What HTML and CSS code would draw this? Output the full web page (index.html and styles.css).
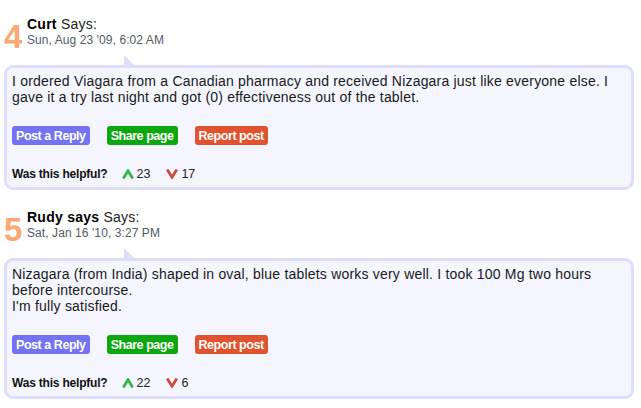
FILE: index.html
```html
<!DOCTYPE html>
<html>
<head>
<meta charset="utf-8">
<link rel="stylesheet" href="styles.css">
</head>
<body>
<div class="comments">
  <div class="post">
    <div class="post-head">
      <span class="num">4</span>
      <div class="who">
        <div class="name"><b>Curt</b> Says:</div>
        <div class="date">Sun, Aug 23 '09, 6:02 AM</div>
      </div>
    </div>
    <div class="bubble">
      <span class="tail"></span>
      <p class="text">I ordered Viagara from a Canadian pharmacy and received Nizagara just like everyone else. I gave it a try last night and got (0) effectiveness out of the tablet.</p>
      <div class="actions">
        <a class="btn btn-reply">Post a Reply</a>
        <a class="btn btn-share">Share page</a>
        <a class="btn btn-report">Report post</a>
      </div>
      <div class="helpful">
        <span class="helpful-q">Was this helpful?</span>
        <span class="vote up"><svg width="12" height="10" viewBox="0 0 12 10"><polyline points="1.2,9.5 6,1.8 10.8,9.5" fill="none" stroke="#2fb84a" stroke-width="2.8" stroke-linejoin="miter"/></svg>23</span>
        <span class="vote down"><svg width="12" height="10" viewBox="0 0 12 10"><polyline points="1.2,0.5 6,8.2 10.8,0.5" fill="none" stroke="#cf4a3c" stroke-width="2.8" stroke-linejoin="miter"/></svg>17</span>
      </div>
    </div>
  </div>
  <div class="post">
    <div class="post-head">
      <span class="num">5</span>
      <div class="who">
        <div class="name"><b>Rudy says</b> Says:</div>
        <div class="date">Sat, Jan 16 '10, 3:27 PM</div>
      </div>
    </div>
    <div class="bubble">
      <span class="tail"></span>
      <p class="text">Nizagara (from India) shaped in oval, blue tablets works very well. I took 100 Mg two hours before intercourse.<br>I'm fully satisfied.</p>
      <div class="actions">
        <a class="btn btn-reply">Post a Reply</a>
        <a class="btn btn-share">Share page</a>
        <a class="btn btn-report">Report post</a>
      </div>
      <div class="helpful">
        <span class="helpful-q">Was this helpful?</span>
        <span class="vote up"><svg width="12" height="10" viewBox="0 0 12 10"><polyline points="1.2,9.5 6,1.8 10.8,9.5" fill="none" stroke="#2fb84a" stroke-width="2.8" stroke-linejoin="miter"/></svg>22</span>
        <span class="vote down"><svg width="12" height="10" viewBox="0 0 12 10"><polyline points="1.2,0.5 6,8.2 10.8,0.5" fill="none" stroke="#cf4a3c" stroke-width="2.8" stroke-linejoin="miter"/></svg>6</span>
      </div>
    </div>
  </div>
</div>
</body>
</html>
```

FILE: styles.css
```css
* { box-sizing: border-box; }
body {
  margin: 0;
  background: #fff;
  font-family: "Liberation Sans", Arial, sans-serif;
  color: #111;
}
.comments {
  padding: 0 7px 0 4px;
  display: flex;
  flex-direction: column;
  gap: 3px;
}
.post {
  padding-top: 16px;
}
.post-head {
  display: flex;
  align-items: flex-start;
  gap: 5px;
}
.num {
  margin-top: 4px;
  font-size: 33px;
  line-height: 33px;
  font-weight: bold;
  color: #fba874;
  width: 18px;
}
.name {
  font-size: 14px;
  line-height: 17px;
  letter-spacing: 0.25px;
  color: #222;
}
.name b { color: #000; }
.date {
  font-size: 12px;
  line-height: 14px;
  letter-spacing: 0.08px;
  color: #555a66;
}
.bubble {
  position: relative;
  margin-top: 12px;
  border: 3px solid #dedefb;
  border-radius: 9px;
  background: #f4f5ff;
  padding: 5px 5px 6px 5px;
}
.tail {
  position: absolute;
  top: -13px;
  left: 117px;
  width: 0;
  height: 0;
  border-left: 10px solid #dedefb;
  border-top: 10px solid transparent;
}
.text {
  margin: 0;
  font-size: 14px;
  line-height: 16px;
  letter-spacing: 0.2px;
  color: #1a1a1a;
}
.actions {
  display: flex;
  gap: 17px;
  margin-top: 21px;
}
.btn {
  display: inline-flex;
  align-items: center;
  height: 19px;
  padding: 0 4px;
  border-radius: 3px;
  color: #fff;
  font-size: 12.5px;
  letter-spacing: -0.45px;
  font-weight: bold;
}
.btn-reply { background: #7373f5; }
.btn-share { background: #0ca70d; }
.btn-report { background: #e1532f; }
.helpful {
  display: flex;
  align-items: center;
  margin-top: 22px;
  font-size: 12.5px;
  line-height: 14px;
}
.helpful-q {
  font-weight: bold;
  font-size: 12px;
  letter-spacing: -0.2px;
  color: #111;
  margin-right: 14px;
}
.vote {
  display: inline-flex;
  align-items: center;
  gap: 3px;
  color: #222;
  margin-right: 16px;
}
```
